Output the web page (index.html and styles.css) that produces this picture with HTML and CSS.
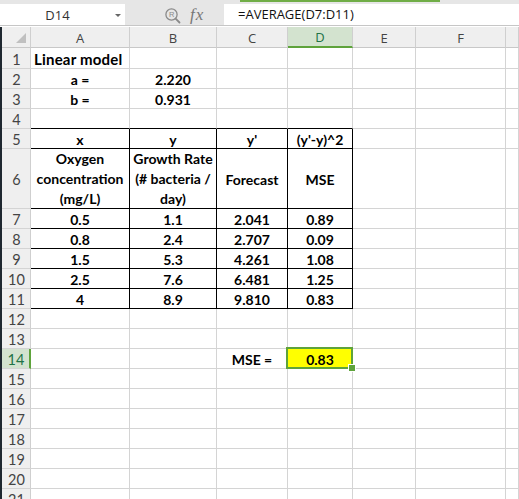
FILE: index.html
```html
<!DOCTYPE html>
<html lang="en">
<head>
    <meta charset="UTF-8">
    <meta name="viewport" content="width=device-width, initial-scale=1.0">
    <title>Linear model</title>
    <link rel="stylesheet" href="styles.css">
</head>
<body>
    <div class="tabStrip"><div class="tabMark"></div></div>
    <div class="formulaBar">
        <div class="nameBox">
            <span class="nameText">D14</span>
            <span class="dropArrow"></span>
        </div>
        <div class="fnTools">
            <svg class="lookup" width="18" height="18" viewBox="0 0 18 18">
                <circle cx="7.5" cy="7.5" r="5.6" fill="none" stroke="#8a8a8a" stroke-width="1.3"/>
                <line x1="11.6" y1="11.6" x2="15.5" y2="15.5" stroke="#8a8a8a" stroke-width="1.8" stroke-linecap="round"/>
                <text x="7.6" y="10.3" font-family="Liberation Sans, sans-serif" font-size="7.5" fill="#8a8a8a" text-anchor="middle">R</text>
            </svg>
            <span class="fx">fx</span>
        </div>
        <div class="formulaInput">=AVERAGE(D7:D11)</div>
    </div>

    <div class="sheet">
        <div class="hd corner"><span class="tri"></span></div>
        <div class="hd col">A</div>
        <div class="hd col">B</div>
        <div class="hd col">C</div>
        <div class="hd col sel">D</div>
        <div class="hd col">E</div>
        <div class="hd col">F</div>
        <div class="hd col"></div>

        <div class="hd row r1">1</div>
        <div class="c b left title">Linear model</div><div class="c"></div><div class="c"></div><div class="c"></div><div class="c"></div><div class="c"></div><div class="c"></div>

        <div class="hd row">2</div>
        <div class="c b">a =</div><div class="c b">2.220</div><div class="c"></div><div class="c"></div><div class="c"></div><div class="c"></div><div class="c"></div>

        <div class="hd row">3</div>
        <div class="c b">b =</div><div class="c b">0.931</div><div class="c"></div><div class="c"></div><div class="c"></div><div class="c"></div><div class="c"></div>

        <div class="hd row">4</div>
        <div class="c topline"></div><div class="c topline"></div><div class="c topline"></div><div class="c topline"></div><div class="c"></div><div class="c"></div><div class="c"></div>

        <div class="hd row">5</div>
        <div class="c b t">x</div><div class="c b t">y</div><div class="c b t">y'</div><div class="c b t">(y'-y)^2</div><div class="c"></div><div class="c"></div><div class="c"></div>

        <div class="hd row tall">6</div>
        <div class="c b t wrap">Oxygen concentration (mg/L)</div>
        <div class="c b t wrap">Growth Rate (# bacteria / day)</div>
        <div class="c b t">Forecast</div>
        <div class="c b t">MSE</div>
        <div class="c"></div><div class="c"></div><div class="c"></div>

        <div class="hd row">7</div>
        <div class="c b t">0.5</div><div class="c b t">1.1</div><div class="c b t">2.041</div><div class="c b t">0.89</div><div class="c"></div><div class="c"></div><div class="c"></div>

        <div class="hd row">8</div>
        <div class="c b t">0.8</div><div class="c b t">2.4</div><div class="c b t">2.707</div><div class="c b t">0.09</div><div class="c"></div><div class="c"></div><div class="c"></div>

        <div class="hd row">9</div>
        <div class="c b t">1.5</div><div class="c b t">5.3</div><div class="c b t">4.261</div><div class="c b t">1.08</div><div class="c"></div><div class="c"></div><div class="c"></div>

        <div class="hd row">10</div>
        <div class="c b t">2.5</div><div class="c b t">7.6</div><div class="c b t">6.481</div><div class="c b t">1.25</div><div class="c"></div><div class="c"></div><div class="c"></div>

        <div class="hd row">11</div>
        <div class="c b t">4</div><div class="c b t">8.9</div><div class="c b t">9.810</div><div class="c b t">0.83</div><div class="c"></div><div class="c"></div><div class="c"></div>

        <div class="hd row">12</div>
        <div class="c"></div><div class="c"></div><div class="c"></div><div class="c"></div><div class="c"></div><div class="c"></div><div class="c"></div>

        <div class="hd row">13</div>
        <div class="c"></div><div class="c"></div><div class="c"></div><div class="c"></div><div class="c"></div><div class="c"></div><div class="c"></div>

        <div class="hd row sel">14</div>
        <div class="c"></div><div class="c"></div><div class="c b">MSE =</div><div class="c b active">0.83</div><div class="c"></div><div class="c"></div><div class="c"></div>

        <div class="hd row">15</div>
        <div class="c"></div><div class="c"></div><div class="c"></div><div class="c"></div><div class="c"></div><div class="c"></div><div class="c"></div>

        <div class="hd row">16</div>
        <div class="c"></div><div class="c"></div><div class="c"></div><div class="c"></div><div class="c"></div><div class="c"></div><div class="c"></div>

        <div class="hd row">17</div>
        <div class="c"></div><div class="c"></div><div class="c"></div><div class="c"></div><div class="c"></div><div class="c"></div><div class="c"></div>

        <div class="hd row">18</div>
        <div class="c"></div><div class="c"></div><div class="c"></div><div class="c"></div><div class="c"></div><div class="c"></div><div class="c"></div>

        <div class="hd row">19</div>
        <div class="c"></div><div class="c"></div><div class="c"></div><div class="c"></div><div class="c"></div><div class="c"></div><div class="c"></div>

        <div class="hd row">20</div>
        <div class="c"></div><div class="c"></div><div class="c"></div><div class="c"></div><div class="c"></div><div class="c"></div><div class="c"></div>

        <div class="hd row">21</div>
        <div class="c"></div><div class="c"></div><div class="c"></div><div class="c"></div><div class="c"></div><div class="c"></div><div class="c"></div>
    </div>
</body>
</html>
```
FILE: styles.css
```css
*{
    box-sizing: border-box;
}
html, body{
    margin: 0;
    height: 100%;
    overflow: hidden;
    background: white;
}
body{
    display: flex;
    flex-direction: column;
}

/* strip above the formula bar */
.tabStrip{
    height: 4px;
    background: #e6e6e6;
    flex-shrink: 0;
}
.tabMark{
    margin-left: 240px;
    width: 200px;
    height: 2px;
    background: #70ad47;
}

/* name box + formula */
.formulaBar{
    height: 22px;
    display: flex;
    flex-direction: row;
    align-items: stretch;
    background: #e6e6e6;
    border-bottom: 1px solid #c6c6c6;
    flex-shrink: 0;
}
.nameBox{
    width: 125px;
    background: white;
    display: flex;
    align-items: center;
    position: relative;
    font-family: "Open Sans", sans-serif;
    font-size: 13px;
    color: #333;
}
.nameText{
    flex: 1;
    text-align: center;
    padding-right: 0;
}
.dropArrow{
    width: 0;height: 0;
    border-left: 3px solid transparent;
    border-right: 3px solid transparent;
    border-top: 3px solid #666;
    margin-right: 4px;
    margin-top: 2px;
}
.fnTools{
    width: 99px;
    display: flex;
    align-items: center;
    padding-left: 39px;
    gap: 8px;
}
.lookup{
    margin-top: 2px;
}
.fx{
    font-family: "Liberation Serif", serif;
    font-style: italic;
    font-size: 17px;
    color: #777;
    letter-spacing: 1px;
}
.formulaInput{
    flex: 1;
    background: white;
    font-family: "Open Sans", sans-serif;
    font-size: 13px;
    line-height: 21px;
    padding-left: 14px;
    color: #111;
}

/* grid */
.sheet{
    margin-top: 1px;
    flex: 1;
    display: grid;
    grid-template-columns: 29px 99px 87px 71px 65px 63px 90px 1fr;
    grid-template-rows: 21px 21px repeat(4, 20px) 60px repeat(15, 20px);
    border-left: 2px solid #1f2830;
    overflow: hidden;
}
.hd{
    background: #efefef;
    border-right: 1px solid #cfcfcf;
    border-bottom: 1px solid #c8c8c8;
    color: #444;
    display: flex;
    align-items: center;
    justify-content: center;
}
.col{
    font-family: "Open Sans", sans-serif;
    font-size: 13px;
    padding-top: 1px;
}
.row{
    font-family: Lato, sans-serif;
    font-size: 14.5px;
    border-bottom-color: #d4d4d4;
    padding-left: 1px;
    padding-top: 2px;
}
.corner{
    position: relative;
}
.tri{
    position: absolute;
    right: 4px;bottom: 4px;
    width: 0;height: 0;
    border-left: 10px solid transparent;
    border-bottom: 10px solid #c0c0c0;
}
.col.sel{
    background: #d3e3cf;
    color: #217346;
    border-bottom: 2px solid #5ea33b;
}
.row.sel{
    background: #d3e3cf;
    color: #217346;
    border-right: 2px solid #5ea33b;
}

.c{
    border-right: 1px solid #d4d4d4;
    border-bottom: 1px solid #d4d4d4;
    font-family: Lato, sans-serif;
    font-size: 14px;
    color: #000;
    display: flex;
    align-items: center;
    justify-content: center;
    text-align: center;
    padding-top: 1px;
    white-space: nowrap;
}
.b{
    font-weight: bold;
}
.left{
    justify-content: flex-start;
    padding-left: 3px;
}
.title{
    font-size: 15px;
    letter-spacing: 0.2px;
}
.t{
    border-right-color: #000;
    border-bottom-color: #000;
}
.topline{
    border-bottom-color: #000;
}
.wrap{
    white-space: normal;
    line-height: 20px;
    padding: 0 2px;
}

/* selected cell */
.active{
    background: #ffff00;
    position: relative;
}
.active::after{
    content: '';
    position: absolute;
    left: -2px;top: -2px;right: -1px;bottom: -1px;
    border: 2px solid #5ea33b;
}
.active::before{
    content: '';
    position: absolute;
    z-index: 2;
    right: -4px;bottom: -4px;
    width: 6px;height: 6px;
    background: #5ea33b;
    border: 1px solid white;
}
```
